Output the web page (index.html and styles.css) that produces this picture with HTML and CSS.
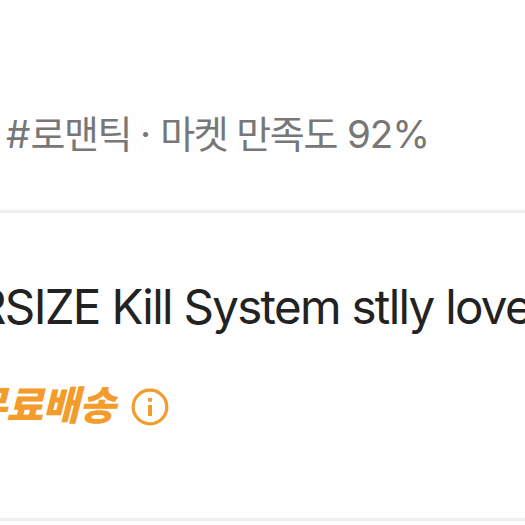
FILE: index.html
```
<!DOCTYPE html>
<html lang="ko">
<head>
<meta charset="UTF-8">
<title>Market</title>
<link rel="stylesheet" href="styles.css">
</head>
<body>

<div class="market-info">
    <span class="tag">#</span><span class="ko">로맨틱</span><span class="dot">·</span><span class="ko">마켓</span><span class="ko second">만족도</span><span class="rate">92%</span>
</div>

<div class="product">
    <div class="product-name">RSIZE Kill System stlly love</div>
    <div class="shipping">
        <span class="free">무료배송</span>
        <svg class="info" viewBox="0 0 38 38">
            <circle cx="19" cy="19" r="16.8" fill="none" stroke="#f39c2b" stroke-width="3.2"/>
            <rect x="17" y="10" width="4" height="3.6" fill="#f39c2b"/>
            <rect x="17" y="17" width="4" height="11" fill="#f39c2b"/>
        </svg>
    </div>
</div>

</body>
</html>
```

FILE: styles.css
```
body {
    margin: 0;
    height: 525px;
    overflow: hidden;
    background-color: #fefefe;
    font-family: Inter, "Noto Sans CJK KR", sans-serif;
}

.market-info {
    display: flex;
    align-items: baseline;
    box-sizing: border-box;
    height: 213px;
    padding: 102px 0 0 6px;
    border-bottom: 3px solid #eeeeee;
    color: #777;
    font-size: 38.5px;
    line-height: 60px;
    white-space: nowrap;
}

.ko {
    font-family: "Noto Sans CJK KR", sans-serif;
    font-size: 38px;
    letter-spacing: -1.4px;
}

.dot {
    margin: 0 9px;
}

.second {
    margin-left: 9px;
}

.rate {
    margin-left: 10px;
    letter-spacing: -1.1px;
}

.product {
    box-sizing: border-box;
    height: 308px;
    padding-top: 64px;
    border-bottom: 3px solid #eeeeee;
}

.product-name {
    margin-left: -24px;
    color: #222;
    font-size: 47.5px;
    line-height: 60px;
    letter-spacing: -1.7px;
    white-space: nowrap;
}

.shipping {
    display: flex;
    align-items: center;
    margin: 40px 0 0 -30px;
    height: 60px;
}

.free {
    color: #f39c2b;
    font-family: "Noto Sans CJK KR", sans-serif;
    font-size: 40px;
    font-weight: 900;
    font-style: italic;
    line-height: 60px;
    letter-spacing: -0.5px;
    padding-bottom: 9px;
}

.info {
    width: 38px;
    height: 38px;
    margin-left: 16px;
}
```
